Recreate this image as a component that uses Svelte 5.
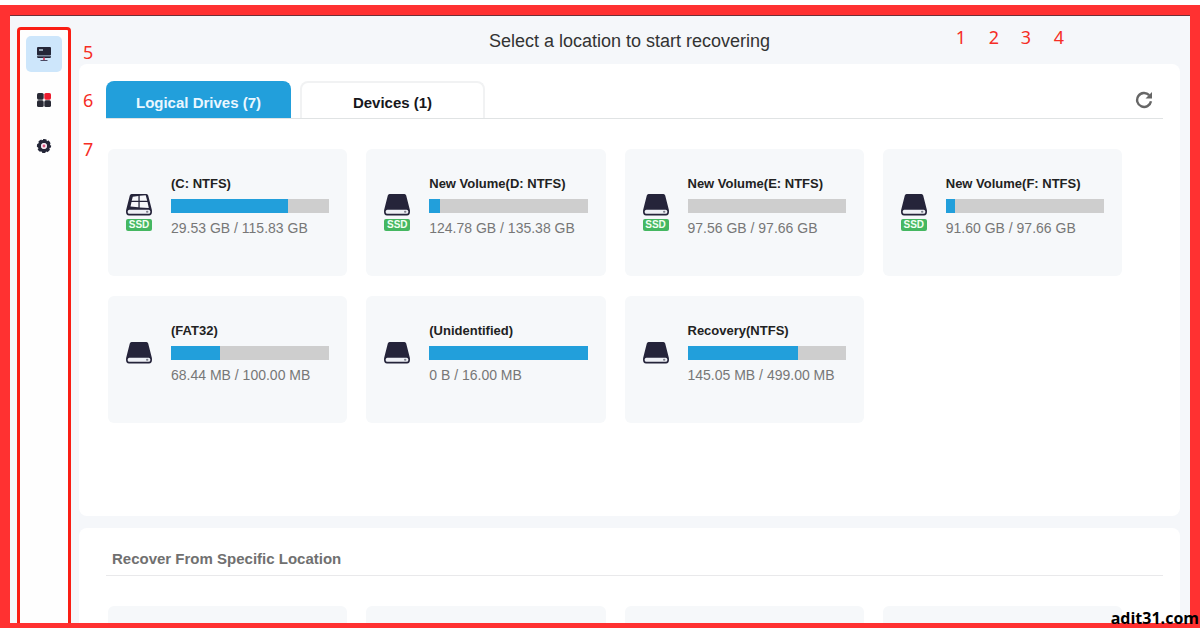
<script>
  const drives = [
    { name: '(C: NTFS)', usage: '29.53 GB / 115.83 GB', used: 74, ssd: true, system: true },
    { name: 'New Volume(D: NTFS)', usage: '124.78 GB / 135.38 GB', used: 7, ssd: true },
    { name: 'New Volume(E: NTFS)', usage: '97.56 GB / 97.66 GB', used: 0, ssd: true },
    { name: 'New Volume(F: NTFS)', usage: '91.60 GB / 97.66 GB', used: 6, ssd: true },
    { name: '(FAT32)', usage: '68.44 MB / 100.00 MB', used: 31 },
    { name: '(Unidentified)', usage: '0 B / 16.00 MB', used: 100 },
    { name: 'Recovery(NTFS)', usage: '145.05 MB / 499.00 MB', used: 70 }
  ];
</script>

<div class="frame">
  <div class="window">
    <nav class="rail" aria-label="Main">
      <button class="active" aria-label="Recover">
        <svg width="16" height="16" viewBox="0 0 16 16">
          <rect x="1" y="1" width="14" height="8.6" rx="1" fill="#242638" />
          <path d="M3 4h4" stroke="#d6e8f8" stroke-width="1.3" />
          <path d="M1 10.200h14v.6q0 1.200-1.200 1.200H2.200Q1 12 1 10.800z" fill="#242638" />
          <path d="M8 11.500v3" stroke="#e04466" stroke-width="1.800" />
          <path d="M4.500 14.500h7" stroke="#4b4963" stroke-width="1" />
        </svg>
      </button>
      <button aria-label="Tools">
        <svg width="16" height="16" viewBox="0 0 16 16">
          <g fill="#292a35">
            <rect x="1" y="1" width="6.700" height="6.700" rx="1.600" />
            <rect x="1" y="8.300" width="6.700" height="6.700" rx="1.600" />
            <rect x="8.300" y="8.300" width="6.700" height="6.700" rx="1.600" />
          </g>
          <rect x="8.300" y="1" width="6.700" height="6.700" rx="1.600" fill="#ed1c2e" />
        </svg>
      </button>
      <button aria-label="Settings">
        <svg width="16" height="16" viewBox="0 0 16 16">
          <circle cx="8" cy="8" r="4.500" fill="none" stroke="#242638" stroke-width="3.400" />
          <circle cx="8" cy="8" r="6.200" fill="none" stroke="#242638" stroke-width="1.800" stroke-dasharray="3.300 1.569" stroke-dashoffset="1.650" />
          <circle cx="8" cy="8" r="2.900" fill="#f5e9f2" />
          <circle cx="8" cy="8" r="1.400" fill="#dc5680" />
        </svg>
      </button>
    </nav>

    <main>
      <header><h1>Select a location to start recovering</h1></header>

      <section class="panel drives">
        <div class="tabbar">
          <div class="tabs" role="tablist">
            <button class="tab selected" role="tab" aria-selected="true">Logical Drives (7)</button>
            <button class="tab" role="tab" aria-selected="false">Devices (1)</button>
          </div>
          <button class="refresh" aria-label="Refresh">
            <svg width="18" height="18" viewBox="0 0 18 18">
              <path d="M14.200 4.200A7 7 0 1 0 16 10.300" fill="none" stroke="#666" stroke-width="2.400" />
              <path d="M17 1v6.500h-6.500z" fill="#666" />
            </svg>
          </button>
        </div>
        <div class="grid">
          {#each drives as drive}
            <button class="card">
              <span class="icon">
                <svg width="26" height="22" viewBox="0 0 26 22">
                  <path d="M5.500 0h15q1.300 0 1.700 1.500l3.300 13Q26 16 26 17.800 26 21.500 23 21.500H3Q0 21.500 0 17.800 0 16 .5 14.500l3.300-13Q4.200 0 5.500 0z" fill="#25243a" />
                  <rect x="1.800" y="15.800" width="22.400" height="4" rx="1.500" fill="#eef0f5" />
                  <rect x="20" y="16.800" width="2.400" height="2" rx="1" fill="#7d7f8c" />
                  {#if drive.system}
                    <path d="M6.800 2.700l5.600-.7v4.800H5.700zM13.700 1.800l6-.6 1.500 5.600h-7.500zM5.500 8.100h6.900v5.200l-7.900-.8zM13.700 8.100h7.800l1.300 6-9.100-.7z" fill="#f6f7fa" />
                  {/if}
                </svg>
                {#if drive.ssd}<span class="badge">SSD</span>{/if}
              </span>
              <span class="info">
                <span class="name">{drive.name}</span>
                <span class="bar"><span class="fill" style="width: {drive.used}%"></span></span>
                <span class="usage">{drive.usage}</span>
              </span>
            </button>
          {/each}
        </div>
      </section>

      <section class="panel locations">
        <h2>Recover From Specific Location</h2>
        <div class="grid">
          {#each [1, 2, 3, 4] as slot (slot)}
            <div class="card"></div>
          {/each}
        </div>
      </section>
    </main>
  </div>

  <span class="mark m1">1</span>
  <span class="mark m2">2</span>
  <span class="mark m3">3</span>
  <span class="mark m4">4</span>
  <span class="mark m5">5</span>
  <span class="mark m6">6</span>
  <span class="mark m7">7</span>
  <span class="credit">adit31.com</span>
</div>

<style>
  :global(body) {
    margin: 0;
    background: #fff;
  }
  .frame {
    position: relative;
    box-sizing: border-box;
    height: 100vh;
    padding-top: 5px;
    overflow: hidden;
    font-family: "Liberation Sans", Arial, sans-serif;
  }
  .window {
    box-sizing: border-box;
    display: flex;
    height: 100%;
    border: 10px solid #ff3131;
    border-bottom-width: 5px;
    background: #f5f7fa;
    box-shadow: inset 0 1px #6d3038;
    overflow: hidden;
  }
  button {
    margin: 0;
    padding: 0;
    border: 0;
    background: none;
    font: inherit;
    color: inherit;
    cursor: pointer;
  }
  svg {
    display: block;
  }
  .rail {
    box-sizing: border-box;
    display: flex;
    flex: none;
    flex-direction: column;
    align-items: center;
    gap: 10px;
    width: 54px;
    margin: 12px 8px 0 7px;
    padding-top: 6px;
    border: 3px solid #fa1e14;
    border-bottom: 0;
    border-radius: 4px 4px 0 0;
    background: #fefefe;
  }
  .rail button {
    display: grid;
    place-items: center;
    width: 36px;
    height: 36px;
    border-radius: 5px;
  }
  .rail .active {
    background: #cde6fb;
  }
  main {
    display: flex;
    flex: 1;
    flex-direction: column;
    min-width: 0;
    margin-right: 10px;
  }
  header {
    display: grid;
    flex: none;
    place-items: center;
    box-sizing: border-box;
    height: 49px;
    padding-top: 4px;
  }
  h1,
  h2 {
    margin: 0;
  }
  h1 {
    font-size: 18px;
    font-weight: 400;
    color: #333;
  }
  .panel {
    box-sizing: border-box;
    flex: none;
    padding: 0 17px 0 27px;
    border-radius: 8px;
    background: #fff;
  }
  .drives {
    min-height: 452px;
    padding-top: 17px;
  }
  .tabbar {
    display: flex;
    align-items: center;
    justify-content: space-between;
    padding-right: 10px;
    border-bottom: 1px solid #e0e3e4;
  }
  .tabs {
    display: flex;
    gap: 9px;
  }
  .tab {
    box-sizing: border-box;
    width: 185px;
    height: 37px;
    padding-top: 4px;
    border: 2px solid #f1f2f3;
    border-bottom: 0;
    border-radius: 8px 8px 0 0;
    font-size: 15px;
    font-weight: 700;
    color: #16171c;
  }
  .tab.selected {
    border-color: #229fdb;
    background: #229fdb;
    color: #eaf7ff;
  }
  .grid {
    display: grid;
    grid-template-columns: repeat(4, minmax(0, 1fr));
    gap: 20px 19px;
    padding: 30px 41px 0 2px;
  }
  .card {
    box-sizing: border-box;
    display: flex;
    align-items: center;
    gap: 19px;
    height: 127px;
    padding: 0 18px 14px;
    border-radius: 6px;
    background: #f6f8fa;
    text-align: left;
  }
  .icon {
    display: flex;
    flex: none;
    flex-direction: column;
    gap: 3px;
  }
  .icon:has(.badge) {
    padding-top: 14px;
  }
  .badge {
    border-radius: 2px;
    background: #45b761;
    font-size: 10px;
    font-weight: 700;
    line-height: 12px;
    text-align: center;
    color: #f2fff2;
  }
  .info {
    display: flex;
    flex: 1;
    flex-direction: column;
    min-width: 0;
    white-space: nowrap;
  }
  .name {
    margin-bottom: 6px;
    font-size: 13px;
    font-weight: 700;
    line-height: 18px;
    color: #222;
  }
  .bar {
    height: 14px;
    background: #cecece;
  }
  .fill {
    display: block;
    height: 100%;
    background: #229fdb;
  }
  .usage {
    margin-top: 6px;
    font-size: 14px;
    line-height: 18px;
    color: #777;
  }
  .locations {
    margin-top: 12px;
  }
  h2 {
    padding: 21px 6px 7px;
    border-bottom: 1px solid #e9e9eb;
    font-size: 15px;
    line-height: 19px;
    color: #707070;
  }
  .mark {
    position: absolute;
    font-family: "Noto Sans", sans-serif;
    font-size: 18px;
    line-height: 20px;
    color: #f62d25;
  }
  .m1,
  .m2,
  .m3,
  .m4 {
    top: 27px;
  }
  .m1 { right: 234px; }
  .m2 { right: 201px; }
  .m3 { right: 169px; }
  .m4 { right: 136px; }
  .m5,
  .m6,
  .m7 {
    left: 83px;
  }
  .m5 { top: 42px; }
  .m6 { top: 90px; }
  .m7 { top: 139px; }
  .credit {
    position: absolute;
    right: 1px;
    bottom: 0;
    font-family: "Open Sans", sans-serif;
    font-size: 16px;
    font-weight: 700;
    line-height: 20px;
    color: #000;
  }
</style>
